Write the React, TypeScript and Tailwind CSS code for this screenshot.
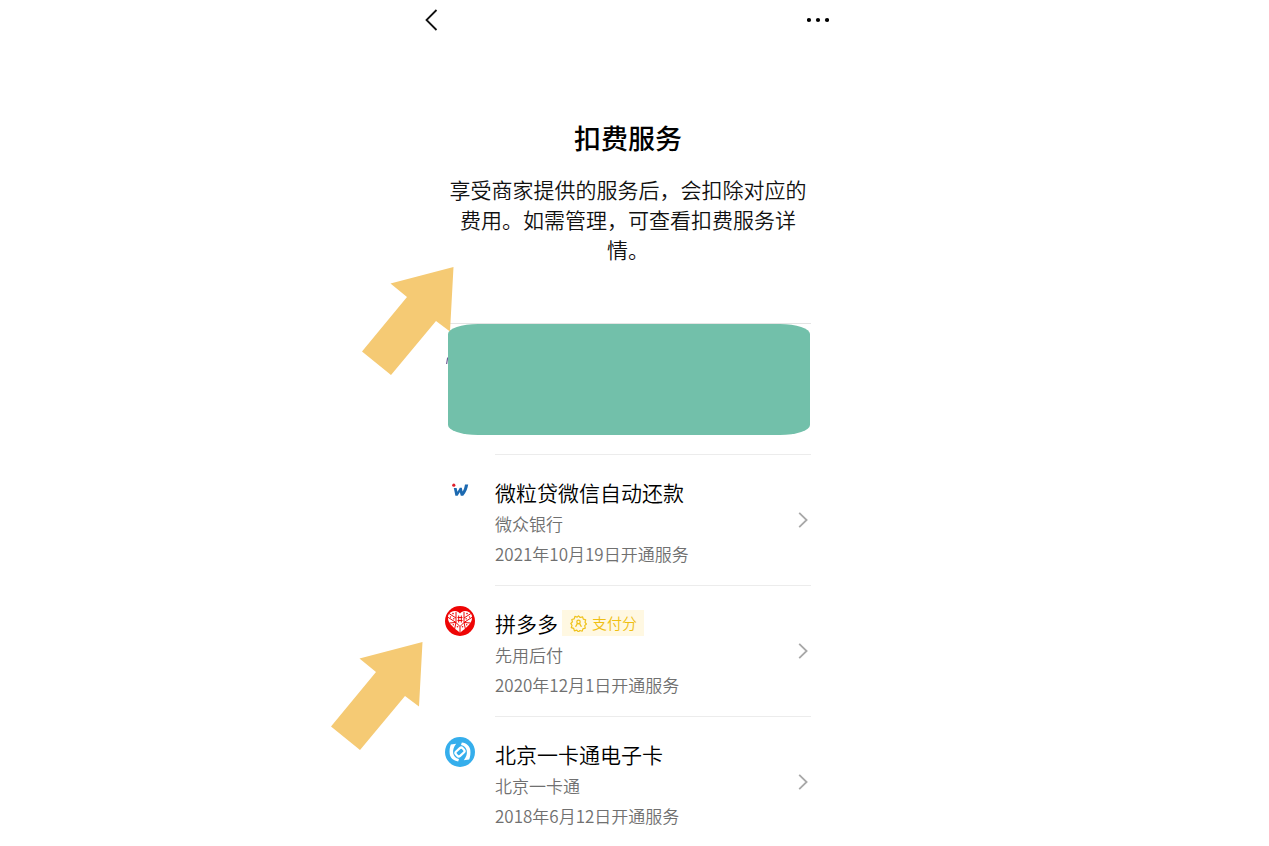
import React from 'react';

interface Service {
  id: string;
  name: string;
  merchant: string;
  date: string;
  icon: React.ReactNode;
  payScore?: boolean;
}

function WeBankIcon() {
  return (
    <svg viewBox="0 0 30 30" className="size-[30px]" fill="none" aria-hidden="true">
      <circle cx="8.8" cy="10.2" r="1.6" fill="#e0202c" />
      <path
        d="M8.800 13h2.800l.9 3.800 2.300-4h2l.8 3.800c1.300-2 2-4.600 2.400-7h3.200c-.6 4.200-2.300 8-5 11.200h-2.400l-1-3.600-2.200 3.600h-2.200z"
        fill="#1c69b0"
      />
    </svg>
  );
}

function PinduoduoIcon() {
  return (
    <svg viewBox="0 0 30 30" className="size-[30px]" fill="none" aria-hidden="true">
      <circle cx="15" cy="15" r="15" fill="#ee0505" />
      <path
        d="M15 7.500C12.600 4 6 4 3.500 8.800c-1.500 3.600.1 7.500 2.700 10.300 2.400 2.700 5.500 5.300 8.800 7.700 3.300-2.400 6.400-5 8.800-7.700 2.600-2.800 4.200-6.700 2.700-10.300C24 4 17.400 4 15 7.500z"
        fill="#fff"
      />
      <g stroke="#ee0505" strokeWidth="1">
        <path d="M11 6v10.500L2.500 11M19 6v10.500l8.500-5.500M11 16.500l4 4 4-4M4.500 17l6.500-.5-1.500 7M25.500 17l-6.500-.5 1.500 7M15 20.500V27" />
        <path d="M4 7.500l7 4.500M26 7.500l-7 4.500M12.500 11.500h5M12.500 14.500h5M13.700 9.500v7M16.300 9.500v7" />
      </g>
      <g fill="#ee0505">
        <circle cx="8" cy="7.600" r=".8" />
        <circle cx="22" cy="7.600" r=".8" />
        <circle cx="5.500" cy="11" r=".7" />
        <circle cx="24.500" cy="11" r=".7" />
        <circle cx="8.800" cy="12.800" r=".7" />
        <circle cx="21.200" cy="12.800" r=".7" />
        <circle cx="8.300" cy="18.800" r=".7" />
        <circle cx="21.700" cy="18.800" r=".7" />
        <circle cx="12.500" cy="20.800" r=".8" />
        <circle cx="17.500" cy="20.800" r=".8" />
      </g>
    </svg>
  );
}

function YikatongIcon() {
  return (
    <svg viewBox="0 0 30 30" className="size-[30px]" fill="none" aria-hidden="true">
      <circle cx="15" cy="15" r="15" fill="#35aeec" />
      <g fill="#fff">
        <path d="M5.800 7.500l5.400-.7C8.800 9.800 7.700 13 8.200 16.200c.5 3 2.600 5 5.800 5.800l-.8 2.400C8.500 23.800 5.300 21 4.700 17c-.4-3.400 0-6.500 1.100-9.500z" />
        <path d="M24.200 22.500l-5.400.7c2.400-3 3.500-6.200 3-9.400-.5-3-2.600-5-5.800-5.800l.8-2.400c4.700.6 7.900 3.400 8.500 7.400.4 3.400 0 6.500-1.100 9.500z" />
      </g>
      <rect x="10.500" y="12" width="9" height="6" rx="2" transform="rotate(-42 15 15)" stroke="#fff" strokeWidth="2.200" />
    </svg>
  );
}

function ScoreIcon() {
  return (
    <svg
      viewBox="0 0 17 17"
      className="size-[17px]"
      fill="none"
      stroke="#efc21c"
      strokeWidth="1.2"
      strokeLinejoin="round"
      strokeLinecap="round"
      aria-hidden="true"
    >
      <path d="M8.500.8l1.700 1.700 2.400-.7.700 2.400 2.400.7-.7 2.400 1.400 1.700-1.700 1.700.6 2.400-2.400.7-.7 2.400-2.300-.7-1.500 1.400-1.600-1.700-2.400.6-.7-2.400-2.400-.7.7-2.300L.800 8.500l1.600-1.600-.6-2.400 2.400-.7.7-2.400 2.300.7z" />
      <path d="M5.800 11.400l1.700-3M11.200 11.400l-1.700-3M7.500 8.600h2" />
      <circle cx="8.500" cy="6.900" r="1.700" />
    </svg>
  );
}

function Arrow({ className }: { className: string }) {
  return (
    <svg viewBox="0 0 92 108" className={`absolute h-[108px] w-[92px] ${className}`} aria-hidden="true">
      <path d="M91.500 0L28.500 16.500 45 30 0 84.500 29 108l45-54 14 10.500z" fill="#f5ca74" />
    </svg>
  );
}

function PayScoreBadge() {
  return (
    <span className="flex h-[26px] items-center gap-[5px] bg-[#fff8e2] pr-[7px] pl-2 text-[15px] leading-5 text-[#efbf12]">
      <ScoreIcon />
      支付分
    </span>
  );
}

function ServiceRow({ service }: { service: Service }) {
  return (
    <li>
      <a href={`#${service.id}`} className="flex gap-5">
        <span className="mt-[21px] shrink-0">{service.icon}</span>
        <span className="flex grow justify-between border-t border-[#ececec] pt-[21px] pb-[16px]">
          <span className="flex flex-col text-[17px] leading-[30px] text-[#707070]">
            <span className="mb-px flex h-8 items-center gap-1 text-[21px] text-black">
              {service.name}
              {service.payScore && <PayScoreBadge />}
            </span>
            <span>{service.merchant}</span>
            <span>{service.date}</span>
          </span>
          <svg viewBox="0 0 10 16" className="mt-9 mr-[3px] h-4 w-[10px]" fill="none" stroke="#a8a8a8" strokeWidth="1.8" aria-hidden="true">
            <path d="M1.200.8L8.600 8l-7.400 7.200" />
          </svg>
        </span>
      </a>
    </li>
  );
}

const services: Service[] = [
  {
    id: 'weilidai',
    name: '微粒贷微信自动还款',
    merchant: '微众银行',
    date: '2021年10月19日开通服务',
    icon: <WeBankIcon />,
  },
  {
    id: 'pinduoduo',
    name: '拼多多',
    merchant: '先用后付',
    date: '2020年12月1日开通服务',
    icon: <PinduoduoIcon />,
    payScore: true,
  },
  {
    id: 'yikatong',
    name: '北京一卡通电子卡',
    merchant: '北京一卡通',
    date: '2018年6月12日开通服务',
    icon: <YikatongIcon />,
  },
];

export default function App() {
  return (
    <div className="flex justify-center overflow-hidden bg-white pr-[13px] font-['Noto_Sans_CJK_SC',sans-serif] font-[350] text-black">
      <div className="relative w-full max-w-[412px]">
        <header className="flex h-10 items-center justify-between pr-[5px] pl-[3px]">
          <button type="button" aria-label="返回">
            <svg viewBox="0 0 13 22" className="h-[22px] w-[13px]" fill="none" stroke="#111" strokeWidth="1.8">
              <path d="M11.500 1L1.500 11l10 10" />
            </svg>
          </button>
          <button type="button" aria-label="更多">
            <svg viewBox="0 0 22 6" className="h-[6px] w-[22px]" fill="#000">
              <circle cx="2" cy="3" r="2.100" />
              <circle cx="11" cy="3" r="2.100" />
              <circle cx="20" cy="3" r="2.100" />
            </svg>
          </button>
        </header>

        <main className="px-[23px] pt-[78px]">
          <h1 className="text-center text-[27px] leading-10 font-medium">扣费服务</h1>
          <p className="mt-4 text-center text-[21px] leading-[30px] text-[#111]">
            享受商家提供的服务后，会扣除对应的费用。如需管理，可查看扣费服务详情。
          </p>

          <div className="relative mt-[59px] border-t border-[#e4e4e4] pr-px pb-[19px] pl-[3px]">
            <svg viewBox="0 0 4 7" className="absolute top-[33px] left-px h-[7px] w-1" fill="none" aria-hidden="true">
              <path d="M.6 7l1-6H4M2.600 2v5" stroke="#6d5c93" strokeWidth="1.2" />
            </svg>
            <div className="relative h-[111px] rounded-[30px/10px] bg-[#72c0aa]" />
          </div>

          <ul>
            {services.map((service) => (
              <ServiceRow key={service.id} service={service} />
            ))}
          </ul>
        </main>

        <Arrow className="top-[267px] -left-[60px]" />
        <Arrow className="top-[642px] -left-[91px]" />
      </div>
    </div>
  );
}
